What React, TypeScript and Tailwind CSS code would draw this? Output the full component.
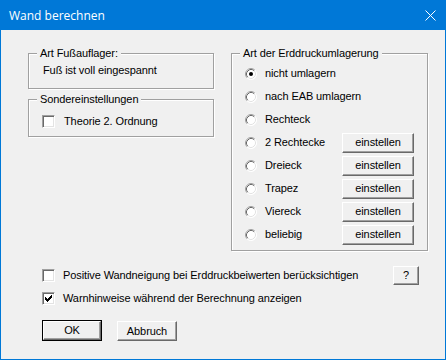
import React from "react";

function Btn({ children, className = "" }: { children: React.ReactNode; className?: string }) {
  return (
    <div
      className={`flex items-center justify-center bg-[#f0f0f0] border border-t-white border-l-white border-r-[#696969] border-b-[#696969] shadow-[inset_-1px_-1px_0_#a0a0a0] text-black ${className}`}
    >
      {children}
    </div>
  );
}

function Group({ label, className = "", children }: { label: string; className?: string; children?: React.ReactNode }) {
  return (
    <div className={`relative border border-[#a0a0a0] shadow-[inset_1px_1px_0_#ffffff,1px_1px_0_#ffffff] ${className}`}>
      <span className="absolute left-[8px] top-[-7px] bg-[#f0f0f0] pl-[3px] pr-[3px] leading-[13px] whitespace-nowrap">
        {label}
      </span>
      {children}
    </div>
  );
}

function Checkbox({ checked = false }: { checked?: boolean }) {
  return (
    <div className="relative w-[13px] h-[13px] shrink-0 bg-white border border-t-[#a0a0a0] border-l-[#a0a0a0] border-r-white border-b-white shadow-[inset_1px_1px_0_#696969,inset_-1px_-1px_0_#e3e3e3]">
      {checked && (
        <svg className="absolute left-[-1px] top-[-1px]" width="13" height="13" viewBox="0 0 13 13">
          <rect x="3" y="5" width="1" height="3" fill="#000" />
          <rect x="4" y="6" width="1" height="3" fill="#000" />
          <rect x="5" y="7" width="1" height="3" fill="#000" />
          <rect x="6" y="6" width="1" height="3" fill="#000" />
          <rect x="7" y="5" width="1" height="3" fill="#000" />
          <rect x="8" y="4" width="1" height="3" fill="#000" />
          <rect x="9" y="3" width="1" height="3" fill="#000" />
        </svg>
      )}
    </div>
  );
}

function Radio({ checked = false }: { checked?: boolean }) {
  return (
    <svg width="12" height="12" viewBox="0 0 12 12" className="shrink-0">
      <circle cx="6" cy="6" r="5.5" fill="#ffffff" />
      <path d="M2.11 9.89 A5.5 5.5 0 0 1 9.89 2.11" stroke="#a0a0a0" fill="none" strokeWidth="1" />
      <path d="M9.89 2.11 A5.5 5.5 0 0 1 2.11 9.89" stroke="#ffffff" fill="none" strokeWidth="1" />
      <path d="M2.82 9.18 A4.5 4.5 0 0 1 9.18 2.82" stroke="#696969" fill="none" strokeWidth="1" />
      <path d="M9.18 2.82 A4.5 4.5 0 0 1 2.82 9.18" stroke="#e3e3e3" fill="none" strokeWidth="1" />
      {checked && <circle cx="6" cy="6" r="2" fill="#000" />}
    </svg>
  );
}

const rows: { label: string; checked?: boolean; button?: boolean }[] = [
  { label: "nicht umlagern", checked: true },
  { label: "nach EAB umlagern" },
  { label: "Rechteck" },
  { label: "2 Rechtecke", button: true },
  { label: "Dreieck", button: true },
  { label: "Trapez", button: true },
  { label: "Viereck", button: true },
  { label: "beliebig", button: true },
];

export default function App() {
  return (
    <div className="w-[446px] h-[360px] bg-[#0078d7] flex flex-col px-[1px] pb-[1px] font-['Liberation_Sans',Arial,sans-serif] text-[11px] leading-[13px] tracking-[-0.1px] text-black">
      <div className="h-[30px] flex items-center justify-between pl-[8px] pr-[9px] text-white">
        <span className="text-[12px] leading-[16px] tracking-normal font-['Open_Sans',sans-serif] pt-[1px]">Wand berechnen</span>
        <svg width="11" height="11" viewBox="0 0 11 11" className="mt-[1px]">
          <path d="M0.5 0.5 L10.5 10.5 M10.5 0.5 L0.5 10.5" stroke="#ffffff" strokeWidth="1" />
        </svg>
      </div>
      <div className="flex-1 bg-[#f0f0f0] pl-[27px] pt-[23px] flex flex-col">
        <div className="flex items-start gap-[17px]">
          <div className="w-[186px] flex flex-col gap-[10px]">
            <Group label="Art Fußauflager:" className="h-[36px] pt-[10px] pl-[14px]">
              <div className="whitespace-nowrap">Fuß ist voll eingespannt</div>
            </Group>
            <Group label="Sondereinstellungen" className="h-[38px] pt-[15px] pl-[13px]">
              <div className="flex items-center gap-[9px]">
                <Checkbox />
                <span className="whitespace-nowrap">Theorie 2. Ordnung</span>
              </div>
            </Group>
          </div>
          <Group label="Art der Erddruckumlagerung" className="w-[197px] h-[198px] pt-[8px] pl-[13px]">
            {rows.map((r) => (
              <div key={r.label} className="h-[23px] flex items-center">
                <div className="w-[97px] shrink-0 flex items-center gap-[8px]">
                  <Radio checked={r.checked} />
                  <span className="whitespace-nowrap">{r.label}</span>
                </div>
                {r.button && <Btn className="w-[72px] h-[20px]">einstellen</Btn>}
              </div>
            ))}
          </Group>
        </div>
        <div className="ml-[14px] mt-[15px] w-[377px] h-[19px] flex items-center">
          <Checkbox />
          <span className="ml-[8px] whitespace-nowrap">Positive Wandneigung bei Erddruckbeiwerten berücksichtigen</span>
          <Btn className="ml-auto w-[26px] h-[19px]">?</Btn>
        </div>
        <div className="ml-[14px] mt-[4px] h-[19px] flex items-center">
          <Checkbox checked />
          <span className="ml-[8px] whitespace-nowrap">Warnhinweise während der Berechnung anzeigen</span>
        </div>
        <div className="ml-[14px] mt-[12px] flex items-start gap-[15px]">
          <div className="w-[60px] h-[21px] border border-black">
            <Btn className="w-full h-full">OK</Btn>
          </div>
          <Btn className="w-[60px] h-[20px] mt-[1px]">Abbruch</Btn>
        </div>
      </div>
    </div>
  );
}
